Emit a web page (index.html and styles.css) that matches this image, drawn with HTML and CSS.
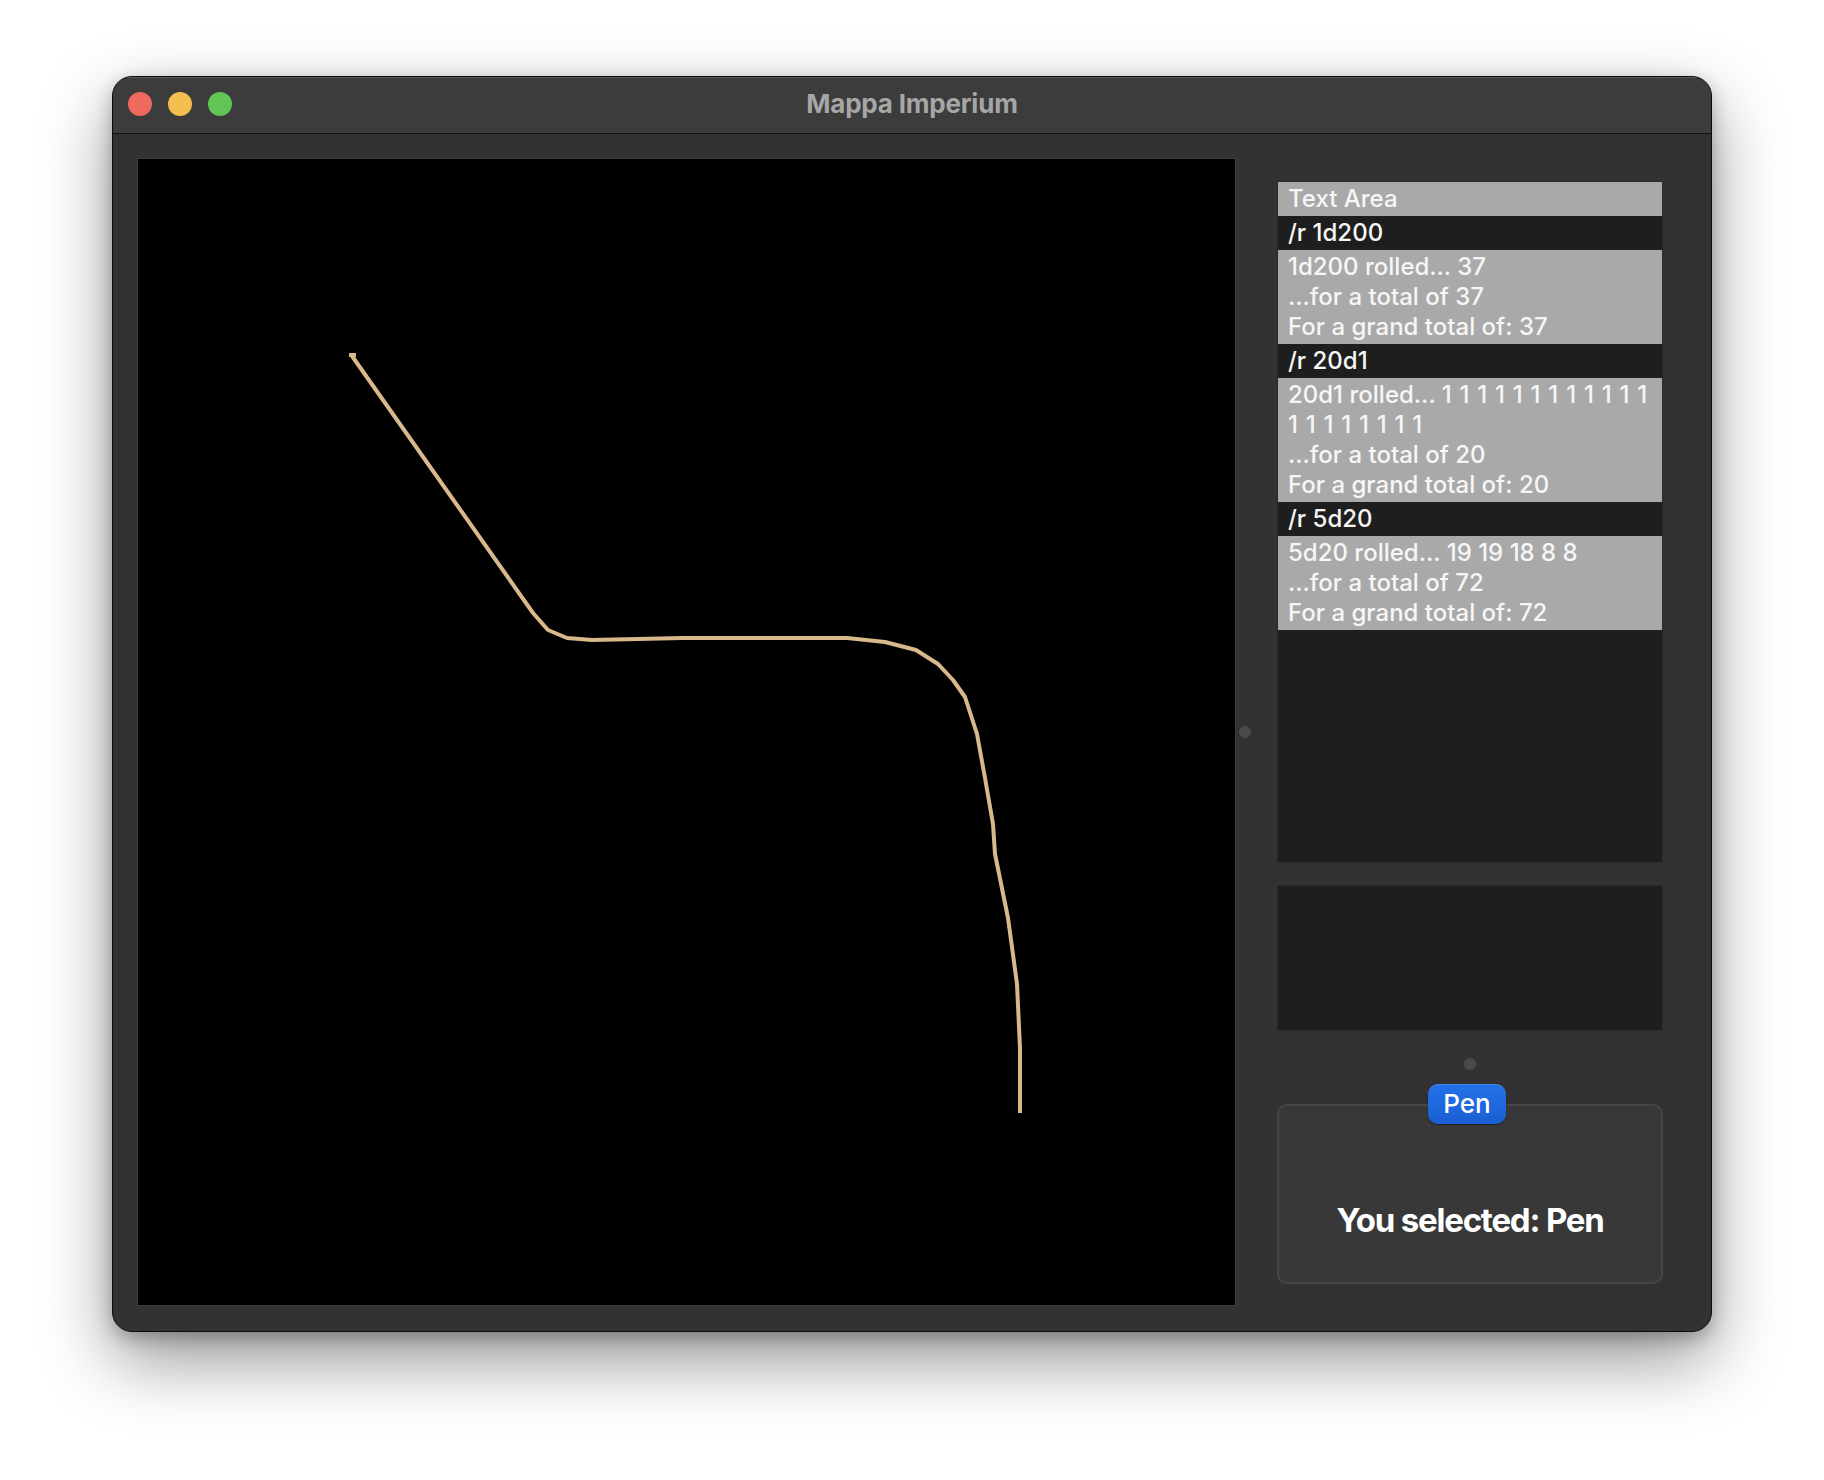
FILE: index.html
```html
<!DOCTYPE html>
<html lang="en">
<head>
<meta charset="utf-8">
<title>Mappa Imperium</title>
<link rel="stylesheet" href="styles.css">
</head>
<body>
<div class="window">
  <div class="titlebar">
    <div class="lights">
      <span class="light red"></span>
      <span class="light yellow"></span>
      <span class="light green"></span>
    </div>
    <div class="title">Mappa Imperium</div>
    <div class="spacer"></div>
  </div>
  <div class="content">
    <div class="canvas">
      <svg class="drawing" viewBox="0 0 1097 1146" preserveAspectRatio="none">
        <polyline class="stroke" points="211,196 218,196"/>
        <polyline class="stroke" points="214,197 395,454 410,471 429,479 454,481 545,479 709,479 747,483 778,491 800,505 815,521 827,538 839,575 847,619 855,665 857,695 870,759 879,825 882,889 882,954"/>
      </svg>
    </div>
    <div class="vsplit"><span class="handle"></span></div>
    <div class="side">
      <div class="log">
        <div class="item out">Text Area</div>
        <div class="item cmd">/r 1d200</div>
        <div class="item out">1d200 rolled... 37<br>...for a total of 37<br>For a grand total of: 37</div>
        <div class="item cmd">/r 20d1</div>
        <div class="item out">20d1 rolled... <span class="ones">1 1 1 1 1 1 1 1 1 1 1 1</span><br><span class="ones">1 1 1 1 1 1 1 1</span><br>...for a total of 20<br>For a grand total of: 20</div>
        <div class="item cmd">/r 5d20</div>
        <div class="item out">5d20 rolled... 19 19 18 8 8<br>...for a total of 72<br>For a grand total of: 72</div>
      </div>
      <div class="input"></div>
      <div class="hsplit"><span class="handle"></span></div>
      <div class="group">
        <button class="pen-btn">Pen</button>
        <div class="group-box">
          <div class="selected">You selected: Pen</div>
        </div>
      </div>
    </div>
  </div>
</div>
</body>
</html>
```

FILE: styles.css
```css
* { box-sizing: border-box; }

html, body {
  margin: 0;
  padding: 0;
  background: #ffffff;
}

body {
  padding: 76px 0 0 112px;
  font-family: Inter, "Noto Sans", "Liberation Sans", sans-serif;
  width: 1824px;
  height: 1480px;
  overflow: hidden;
}

.window {
  width: 1600px;
  height: 1256px;
  border-radius: 20px;
  border: 1px solid #0c0c0c;
  background: #323232;
  overflow: hidden;
  box-shadow: 0 28px 70px rgba(0, 0, 0, 0.42), 0 6px 18px rgba(0, 0, 0, 0.25);
  display: flex;
  flex-direction: column;
}

.titlebar {
  height: 57px;
  flex: 0 0 57px;
  background: #3b3c3b;
  border-bottom: 1px solid #111111;
  box-shadow: inset 0 1px 0 rgba(255, 255, 255, 0.16);
  display: grid;
  grid-template-columns: 1fr auto 1fr;
  align-items: center;
  padding-bottom: 3px;
}

.lights {
  display: flex;
  gap: 16px;
  padding-left: 15px;
}

.light {
  width: 24px;
  height: 24px;
  border-radius: 50%;
  display: block;
}
.red { background: #ee6a5f; }
.yellow { background: #f5bf4f; }
.green { background: #61c555; }

.title {
  font-size: 26px;
  font-weight: 700;
  color: #a6a6a6;
  letter-spacing: -0.2px;
}

.content {
  flex: 1;
  display: flex;
  padding: 24px 48px 26px 24px;
}

.canvas {
  flex: 0 0 1099px;
  height: 1148px;
  background: #000000;
  border: 1px solid #3e3e3e;
}

.drawing {
  display: block;
  width: 100%;
  height: 100%;
}

.stroke {
  fill: none;
  stroke: #d9b88c;
  stroke-width: 4;
  stroke-linejoin: round;
}

.vsplit {
  flex: 0 0 18px;
  display: flex;
  align-items: center;
  justify-content: center;
}

.handle {
  display: block;
  width: 12px;
  height: 12px;
  border-radius: 50%;
  background: #4a4a4a;
}

.side {
  flex: 0 0 386px;
  width: 386px;
  min-width: 0;
  margin-left: 23px;
  padding-top: 23px;
  display: flex;
  flex-direction: column;
}

.log {
  height: 682px;
  background: #1e1e1e;
  border: 1px solid #2a2a2a;
  font-size: 24px;
  font-weight: 450;
  line-height: 30px;
  color: #f6f6f6;
  letter-spacing: 0;
  overflow: hidden;
}

.item {
  padding: 2px 10px;
  white-space: nowrap;
}
.item.out { background: #a9a9a9; }
.item.cmd { background: #1e1e1e; }

.ones {
  word-spacing: 1.4px;
}

.input {
  margin-top: 22px;
  height: 146px;
  background: #1e1e1e;
  border: 1px solid #2a2a2a;
}

.hsplit {
  height: 53px;
  display: flex;
  justify-content: center;
  padding-top: 27px;
}

.group {
  display: flex;
  flex-direction: column;
  align-items: center;
}

.pen-btn {
  position: relative;
  z-index: 1;
  height: 40px;
  padding: 0 15px;
  margin-left: -6px;
  border: none;
  border-radius: 10px;
  background: linear-gradient(#2471e8, #1a5fd3);
  box-shadow: 0 1px 2px rgba(0, 0, 0, 0.45), inset 0 1px 0 rgba(255, 255, 255, 0.15);
  color: #ffffff;
  font-family: Inter, "Noto Sans", "Liberation Sans", sans-serif;
  font-size: 26px;
  font-weight: 500;
  line-height: 40px;
}

.group-box {
  margin-top: -20px;
  width: 100%;
  height: 180px;
  background: #383838;
  border: 2px solid #464646;
  border-radius: 10px;
  padding-top: 94px;
  text-align: center;
}

.selected {
  font-size: 33px;
  font-weight: 700;
  line-height: 40px;
  color: #ffffff;
  letter-spacing: -1.2px;
}
```
